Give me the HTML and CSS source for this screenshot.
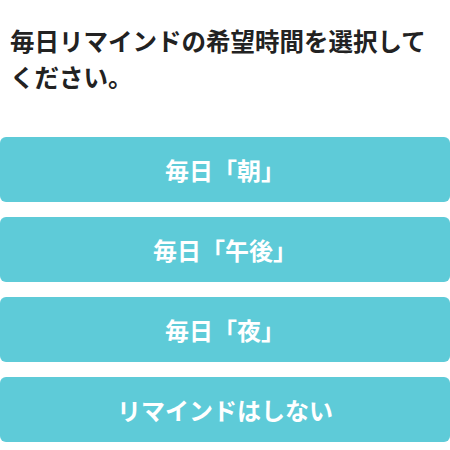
FILE: index.html
```html
<!DOCTYPE html>
<html lang="ja">
<head>
    <meta charset="UTF-8">
    <meta name="viewport" content="width=device-width, initial-scale=1.0">
    <title>リマインド設定</title>
    <link rel="stylesheet" href="styles.css">
</head>
<body>
    <div class="container">
        <h1 class="question">毎日リマインドの希望時間を選択してください。</h1>
        <div class="choices">
            <button class="choice">毎日「朝」</button>
            <button class="choice">毎日「午後」</button>
            <button class="choice">毎日「夜」</button>
            <button class="choice">リマインドはしない</button>
        </div>
    </div>
</body>
</html>
```

FILE: styles.css
```css
body {
    font-family: "Noto Sans CJK JP", "Noto Sans", sans-serif;
    background-color: #ffffff;
    margin: 0;
    padding: 0;
}

.container {
    width: 450px;
}

.question {
    margin: 0;
    padding: 23px 10px 0;
    font-size: 24.5px;
    font-weight: bold;
    line-height: 36px;
    color: #222222;
}

.choices {
    display: flex;
    flex-direction: column;
    gap: 15px;
    margin-top: 42px;
}

.choice {
    height: 65px;
    width: 100%;
    border: none;
    border-radius: 6px;
    background-color: #5ecbd8;
    color: #ffffff;
    font-family: inherit;
    font-size: 24px;
    font-weight: bold;
    cursor: pointer;
    padding: 0;
}
```
